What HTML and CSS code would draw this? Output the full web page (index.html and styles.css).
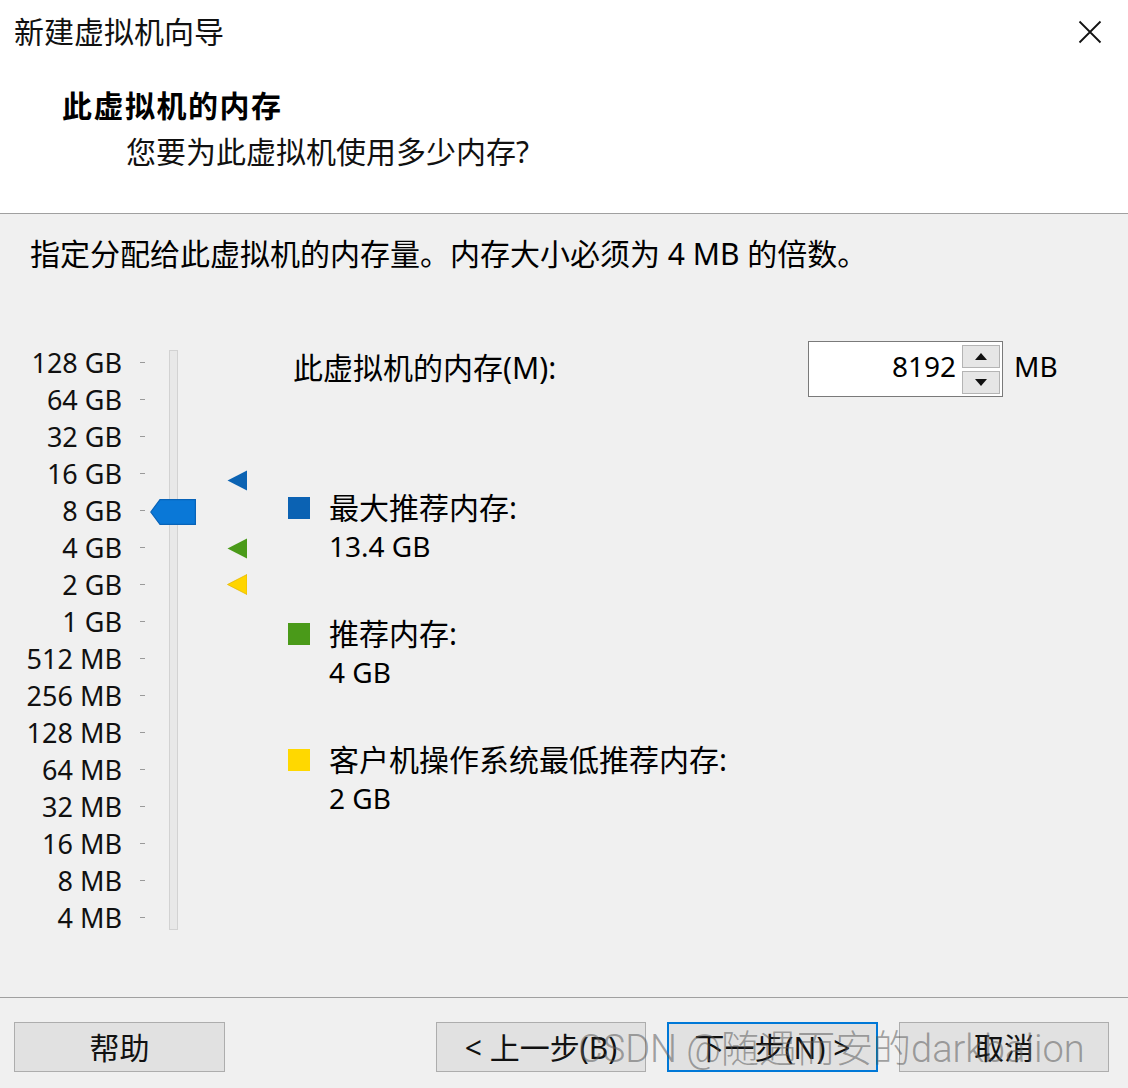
FILE: index.html
```html
<!DOCTYPE html>
<html lang="zh-CN">
<head>
<meta charset="utf-8">
<title>新建虚拟机向导</title>
<link rel="stylesheet" href="styles.css">
</head>
<body>
<div class="window">
  <header class="header">
    <div class="titlebar">
      <span class="title">新建虚拟机向导</span>
      <svg class="close" viewBox="0 0 24 24" width="24" height="24"><path d="M1.5 1.5 L22.5 22.5 M22.5 1.5 L1.5 22.5" stroke="#111" stroke-width="1.8" fill="none"/></svg>
    </div>
    <div class="heading">此虚拟机的内存</div>
    <div class="subheading">您要为此虚拟机使用多少内存?</div>
  </header>

  <main class="main">
    <p class="desc">指定分配给此虚拟机的内存量。内存大小必须为 4 MB 的倍数。</p>
    <div class="content">
      <div class="slider">
        <div class="scale">
          <div class="tick-row"><span class="lbl">128 GB</span><span class="tick"></span></div>
          <div class="tick-row"><span class="lbl">64 GB</span><span class="tick"></span></div>
          <div class="tick-row"><span class="lbl">32 GB</span><span class="tick"></span></div>
          <div class="tick-row"><span class="lbl">16 GB</span><span class="tick"></span></div>
          <div class="tick-row"><span class="lbl">8 GB</span><span class="tick"></span></div>
          <div class="tick-row"><span class="lbl">4 GB</span><span class="tick"></span></div>
          <div class="tick-row"><span class="lbl">2 GB</span><span class="tick"></span></div>
          <div class="tick-row"><span class="lbl">1 GB</span><span class="tick"></span></div>
          <div class="tick-row"><span class="lbl">512 MB</span><span class="tick"></span></div>
          <div class="tick-row"><span class="lbl">256 MB</span><span class="tick"></span></div>
          <div class="tick-row"><span class="lbl">128 MB</span><span class="tick"></span></div>
          <div class="tick-row"><span class="lbl">64 MB</span><span class="tick"></span></div>
          <div class="tick-row"><span class="lbl">32 MB</span><span class="tick"></span></div>
          <div class="tick-row"><span class="lbl">16 MB</span><span class="tick"></span></div>
          <div class="tick-row"><span class="lbl">8 MB</span><span class="tick"></span></div>
          <div class="tick-row"><span class="lbl">4 MB</span><span class="tick"></span></div>
        </div>
        <div class="track-area">
          <div class="track"></div>
          <svg class="thumb" viewBox="0 0 46 26" width="46" height="26"><polygon points="0.8,13 10,0.6 45.4,0.6 45.4,25.4 10,25.4" fill="#0a78d7" stroke="#0863b8" stroke-width="1.2"/></svg>
          <svg class="marker marker-max" viewBox="0 0 20 21" width="20" height="21"><polygon points="0.5,10.5 20,0.5 20,20.5" fill="#0b63b3"/></svg>
          <svg class="marker marker-rec" viewBox="0 0 20 21" width="20" height="21"><polygon points="0.5,10.5 20,0.5 20,20.5" fill="#4a9a19"/></svg>
          <svg class="marker marker-min" viewBox="0 0 20 21" width="20" height="21"><polygon points="0.5,10.5 20,0.5 20,20.5" fill="#ffd500" stroke="#e6b800" stroke-width="0.8"/></svg>
        </div>
      </div>

      <div class="panel">
        <div class="mem-row">
          <span class="mem-label">此虚拟机的内存(M):</span>
          <div class="spin">
            <span class="spin-value">8192</span>
            <div class="spin-btns">
              <div class="spin-btn"><span class="arrow-up"></span></div>
              <div class="spin-btn"><span class="arrow-down"></span></div>
            </div>
          </div>
          <span class="unit">MB</span>
        </div>

        <div class="legend">
          <div class="legend-item">
            <span class="swatch swatch-blue"></span>
            <span class="legend-label">最大推荐内存:</span>
            <span class="legend-value">13.4 GB</span>
          </div>
          <div class="legend-item">
            <span class="swatch swatch-green"></span>
            <span class="legend-label">推荐内存:</span>
            <span class="legend-value">4 GB</span>
          </div>
          <div class="legend-item">
            <span class="swatch swatch-yellow"></span>
            <span class="legend-label">客户机操作系统最低推荐内存:</span>
            <span class="legend-value">2 GB</span>
          </div>
        </div>
      </div>
    </div>
  </main>

  <footer class="footer">
    <div class="btn">帮助</div>
    <div class="btn-group">
      <div class="btn">&lt; 上一步(B)</div>
      <div class="btn btn-default">下一步(N) &gt;</div>
      <div class="btn">取消</div>
    </div>
  </footer>

  <div class="watermark">CSDN @随遇而安的darkbalion</div>
</div>
</body>
</html>
```

FILE: styles.css
```css
html, body {
  margin: 0;
  padding: 0;
}

body {
  width: 1128px;
  height: 1088px;
  overflow: hidden;
  background: #f0f0f0;
  color: #000;
  font-family: "Noto Sans", "Noto Sans CJK SC", sans-serif;
}

.window {
  position: relative;
  height: 1088px;
  display: flex;
  flex-direction: column;
}

/* ---------- header ---------- */
.header {
  flex: none;
  box-sizing: border-box;
  height: 214px;
  background: #fff;
  border-bottom: 1px solid #a0a0a0;
}

.titlebar {
  height: 64px;
  display: flex;
  align-items: center;
  justify-content: space-between;
  padding: 0 26px 0 14px;
}

.title {
  font-size: 30px;
  line-height: 1;
  color: #111;
}

.close {
  display: block;
}

.heading {
  margin-top: 22px;
  padding-left: 62px;
  font-size: 30px;
  font-weight: 700;
  letter-spacing: 1.5px;
  line-height: 40px;
}

.subheading {
  margin-top: 6px;
  padding-left: 126px;
  font-size: 30px;
  line-height: 40px;
  color: #111;
}

/* ---------- main ---------- */
.main {
  flex: 1;
  min-height: 0;
}

.desc {
  margin: 20px 0 0 30px;
  font-size: 30px;
  line-height: 40px;
}

.content {
  display: flex;
  margin-top: 67px;
}

.slider {
  display: flex;
  width: 288px;
  flex: none;
}

.scale {
  width: 147px;
  padding-top: 3px;
}

.tick-row {
  display: grid;
  grid-template-columns: 122px 25px;
  align-items: center;
  height: 37px;
  font-size: 27px;
  line-height: 37px;
}

.lbl {
  text-align: right;
  white-space: nowrap;
  color: #111;
}

.tick {
  display: block;
  width: 5px;
  height: 1px;
  margin-left: 18px;
  background: #9a9a9a;
}

.track-area {
  position: relative;
  flex: 1;
}

.track {
  box-sizing: border-box;
  width: 9px;
  height: 580px;
  margin: 9px 0 0 22px;
  background: #e8e8e8;
  border: 1px solid #d2d2d2;
}

.thumb {
  position: absolute;
  left: 3px;
  top: 158px;
}

.marker {
  position: absolute;
  left: 80px;
}

.marker-max { top: 129px; }
.marker-rec { top: 197px; }
.marker-min { top: 233px; }

/* ---------- right panel ---------- */
.panel {
  flex: 1;
}

.mem-row {
  display: flex;
  align-items: center;
  height: 56px;
}

.mem-label {
  box-sizing: border-box;
  width: 520px;
  padding: 0 0 6px 5px;
  font-size: 30px;
}

.spin {
  box-sizing: border-box;
  width: 195px;
  height: 56px;
  display: flex;
  align-items: center;
  background: #fff;
  border: 1px solid #7a7a7a;
}

.spin-value {
  flex: 1;
  text-align: right;
  padding: 0 6px 6px 0;
  font-size: 28px;
}

.spin-btns {
  display: flex;
  flex-direction: column;
  gap: 3px;
  width: 38px;
  margin-right: 2px;
}

.spin-btn {
  box-sizing: border-box;
  height: 23px;
  display: flex;
  align-items: center;
  justify-content: center;
  background: #e6e6e6;
  border: 1px solid #b4b4b4;
}

.arrow-up,
.arrow-down {
  width: 0;
  height: 0;
  border-left: 6px solid transparent;
  border-right: 6px solid transparent;
}

.arrow-up { border-bottom: 7px solid #111; }
.arrow-down { border-top: 7px solid #111; }

.unit {
  margin-left: 11px;
  padding-bottom: 6px;
  font-size: 28px;
}

.legend {
  margin-top: 91px;
  display: flex;
  flex-direction: column;
  gap: 48px;
}

.legend-item {
  display: grid;
  grid-template-columns: 22px 1fr;
  grid-template-rows: 39px 39px;
  column-gap: 19px;
  align-items: center;
}

.swatch {
  grid-row: 1;
  grid-column: 1;
  width: 22px;
  height: 22px;
}

.swatch-blue { background: #0b62b3; }
.swatch-green { background: #4a9a19; }
.swatch-yellow { background: #ffd800; }

.legend-label {
  grid-row: 1;
  grid-column: 2;
  font-size: 30px;
  line-height: 39px;
}

.legend-value {
  grid-row: 2;
  grid-column: 2;
  font-size: 28px;
  line-height: 39px;
}

/* ---------- footer ---------- */
.footer {
  flex: none;
  box-sizing: border-box;
  height: 91px;
  display: flex;
  align-items: flex-start;
  padding: 24px 19px 0 14px;
  border-top: 1px solid #a0a0a0;
}

.btn-group {
  margin-left: auto;
  display: flex;
  gap: 21px;
}

.btn {
  box-sizing: border-box;
  width: 211px;
  height: 50px;
  display: flex;
  align-items: center;
  justify-content: center;
  padding-bottom: 3px;
  background: #e1e1e1;
  border: 1px solid #adadad;
  font-size: 30px;
  color: #111;
}

.btn-group .btn { width: 210px; }
.btn-group .btn-default {
  width: 211px;
  border: 2px solid #0078d7;
}

/* ---------- watermark overlay ---------- */
.watermark {
  position: absolute;
  left: 578px;
  top: 1025px;
  font-family: Roboto, "Noto Sans CJK SC", sans-serif;
  font-weight: 300;
  font-size: 38px;
  line-height: 48px;
  white-space: nowrap;
  color: rgba(90, 90, 90, 0.55);
  pointer-events: none;
}
```
